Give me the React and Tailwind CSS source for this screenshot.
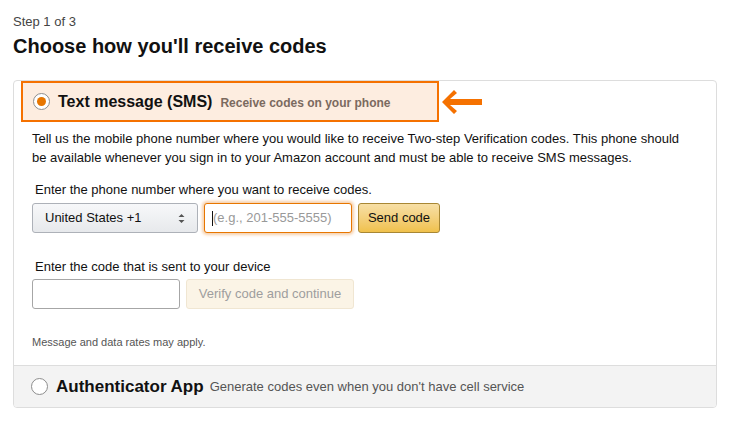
import React from 'react';

const font = { fontFamily: '"Liberation Sans", Arial, sans-serif' };

const Radio = ({ checked }) => (
  <span className="flex h-[17px] w-[17px] shrink-0 items-center justify-center rounded-full border border-[#8d8d8d] bg-white">
    {checked && <span className="h-[9px] w-[9px] rounded-full bg-[#e77600]" />}
  </span>
);

export default function App() {
  return (
    <div className="min-h-screen bg-white text-[#111]" style={font}>
      <div className="px-[13px] pt-[13px]">
        <div className="text-[13px] leading-[18px] text-[#444]">Step 1 of 3</div>
        <h1 className="mt-[2px] text-[20px] font-bold leading-[26px] text-[#111]">
          Choose how you'll receive codes
        </h1>

        <div className="relative mt-[21px] w-[704px] overflow-hidden rounded-[4px] border border-[#ddd]">
          <div className="flex items-center">
            <div className="ml-[7px] flex h-[41px] w-[418px] items-center border-2 border-[#f57100] bg-[#fdede0] pl-[10px]">
              <Radio checked />
              <span className="ml-[8px] text-[16px] font-bold text-[#111]">Text message (SMS)</span>
              <span className="ml-[8px] pt-[2px] text-[12px] font-bold text-[#7b6a5f]">
                Receive codes on your phone
              </span>
            </div>
            <svg className="ml-[2px]" width="42" height="28" viewBox="0 0 42 28">
              <path d="M1 14 L13 2 L16 5 L9 11 L41 11 L41 17 L9 17 L16 23 L13 26 Z" fill="#f57100" />
            </svg>
          </div>

          <div className="px-[18px] pb-[15px]">
            <p className="mt-[7px] w-[660px] text-[13px] leading-[19px] text-[#111]">
              Tell us the mobile phone number where you would like to receive Two-step Verification codes. This phone should be available whenever you sign in to your Amazon account and must be able to receive SMS messages.
            </p>

            <div className="mt-[14px] pl-[3px] text-[13px] leading-[18px]">
              Enter the phone number where you want to receive codes.
            </div>
            <div className="mt-[4px] flex gap-[6px]">
              <div className="flex h-[30px] w-[166px] items-center justify-between rounded-[3px] border border-[#adb1b8] bg-gradient-to-b from-[#f7f8fa] to-[#e7e9ec] px-[12px] text-[13px]">
                <span>United States +1</span>
                <svg width="7" height="11" viewBox="0 0 7 11">
                  <path d="M0.5 4 L3.5 1 L6.5 4 Z M0.5 7 L3.5 10 L6.5 7 Z" fill="#555" />
                </svg>
              </div>
              <div className="flex h-[30px] w-[148px] items-center rounded-[3px] border border-[#e77600] bg-white px-[7px] text-[13px] shadow-[0_0_3px_2px_rgba(228,121,17,0.35)]">
                <span className="h-[15px] w-px bg-[#111]" />
                <span className="text-[#999]">(e.g., 201-555-5555)</span>
              </div>
              <button className="h-[30px] w-[82px] rounded-[3px] border border-[#a88734] bg-gradient-to-b from-[#f7dfa5] to-[#f0c14b] text-[13px] text-[#111]">
                Send code
              </button>
            </div>

            <div className="mt-[25px] pl-[3px] text-[13px] leading-[18px]">
              Enter the code that is sent to your device
            </div>
            <div className="mt-[3px] flex gap-[6px]">
              <div className="h-[30px] w-[148px] rounded-[3px] border border-[#a6a6a6] bg-white" />
              <button className="h-[30px] w-[168px] rounded-[3px] border border-[#f0e6d2] bg-[#fbf4e6] text-[13px] text-[#9e9e9e]">
                Verify code and continue
              </button>
            </div>

            <div className="mt-[25px] text-[11px] leading-[16px] text-[#555]">
              Message and data rates may apply.
            </div>
          </div>

          <div className="flex h-[42px] items-center border-t border-[#ddd] bg-[#f3f3f3] pl-[17px]">
            <Radio />
            <span className="ml-[8px] text-[17px] font-bold text-[#111]">Authenticator App</span>
            <span className="ml-[6px] pt-[1px] text-[13px] text-[#555]">
              Generate codes even when you don't have cell service
            </span>
          </div>
        </div>
      </div>
    </div>
  );
}
